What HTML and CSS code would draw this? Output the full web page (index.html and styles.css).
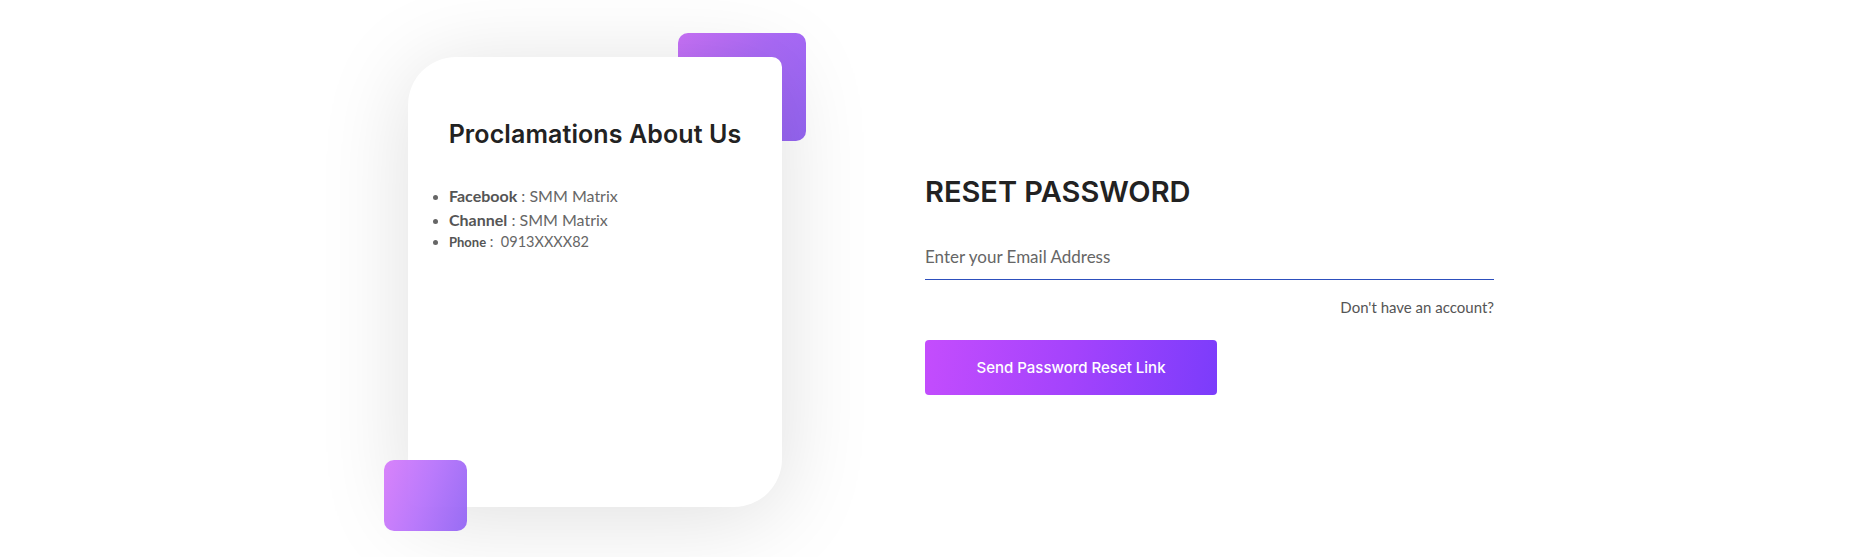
FILE: index.html
```html
<!DOCTYPE html>
<html lang="en">
<head>
<meta charset="utf-8">
<title>Reset Password</title>
<link rel="stylesheet" href="styles.css">
</head>
<body>
<main class="page">
  <section class="card-wrap">
    <span class="deco deco-top"></span>
    <div class="card">
      <h2 class="card-title">Proclamations About Us</h2>
      <ul class="card-list">
        <li><strong>Facebook</strong> : SMM Matrix</li>
        <li><strong>Channel</strong> : SMM Matrix</li>
        <li class="small"><strong>Phone</strong> :&nbsp; 0913XXXX82</li>
      </ul>
    </div>
    <span class="deco deco-bottom"></span>
  </section>
  <section class="form-wrap">
    <h1 class="form-title">RESET PASSWORD</h1>
    <form class="form">
      <input class="email" type="email" placeholder="Enter your Email Address">
      <div class="form-link"><a href="#">Don't have an account?</a></div>
      <button class="btn" type="button">Send Password Reset Link</button>
    </form>
  </section>
</main>
</body>
</html>
```
FILE: styles.css
```css
* { box-sizing: border-box; }
html, body { margin: 0; padding: 0; background: #fff; }
body { font-family: "Lato", "Open Sans", sans-serif; color: #555; }

.page {
  display: flex;
  align-items: flex-start;
  padding: 57px 0 0 408px;
  gap: 143px;
  height: 557px;
  overflow: hidden;
}

.card-wrap { position: relative; width: 374px; height: 450px; flex: none; }

.card {
  position: relative;
  z-index: 1;
  width: 374px;
  height: 450px;
  background: #fff;
  border-radius: 48px 10px 48px 10px;
  box-shadow: 0 10px 90px rgba(0, 0, 0, 0.13);
  padding-top: 59px;
}

.deco {
  position: absolute;
  border-radius: 10px;
  background: linear-gradient(135deg, #c972f8 0%, #a96af6 45%, #9565f3 100%);
}
.deco-top { width: 128px; height: 108px; top: -24px; right: -24px; z-index: 0; }
.deco-bottom {
  width: 83px; height: 71px; left: -24px; bottom: -24px; z-index: 2;
  background: linear-gradient(110deg, #d77dfb 0%, #b673fb 50%, #9366f4 100%);
  opacity: 0.95;
}

.card-title {
  margin: 0;
  text-align: center;
  font-family: "Inter", sans-serif;
  font-weight: 600;
  font-size: 25px;
  line-height: 36px;
  color: #222;
  letter-spacing: 0.1px;
}

.card-list {
  margin: 32px 0 0;
  padding: 0 0 0 41px;
  list-style: disc;
  font-size: 16px;
  line-height: 24px;
  color: #666;
}
.card-list li::marker { font-size: 14px; color: #666; }
.card-list strong { color: #555; font-weight: 700; }
.card-list li.small { font-size: 14.5px; line-height: 20px; }
.card-list li.small strong { font-size: 13px; }

.form-wrap { width: 569px; flex: none; padding-top: 117px; }

.form-title {
  margin: 0;
  font-family: "Inter", sans-serif;
  font-weight: 600;
  font-size: 29px;
  line-height: 36px;
  color: #222;
}

.form { display: flex; flex-direction: column; margin-top: 30px; }

.email {
  width: 100%;
  height: 40px;
  border: none;
  border-bottom: 1px solid #2d4fbd;
  outline: none;
  padding: 0 0 6px;
  font-family: "Lato", sans-serif;
  font-size: 17px;
  color: #333;
  background: transparent;
}
.email::placeholder { color: #666; }

.form-link { margin-top: 17px; text-align: right; font-size: 15px; line-height: 20px; }
.form-link a { color: #555; text-decoration: none; }

.btn {
  margin-top: 23px;
  width: 292px;
  height: 55px;
  border: none;
  border-radius: 4px;
  background: linear-gradient(100deg, #c44dfd 0%, #a443fc 50%, #7b3cfb 100%);
  color: #fff;
  font-family: "Inter", sans-serif;
  font-weight: 500;
  font-size: 15px;
  cursor: pointer;
}
```
